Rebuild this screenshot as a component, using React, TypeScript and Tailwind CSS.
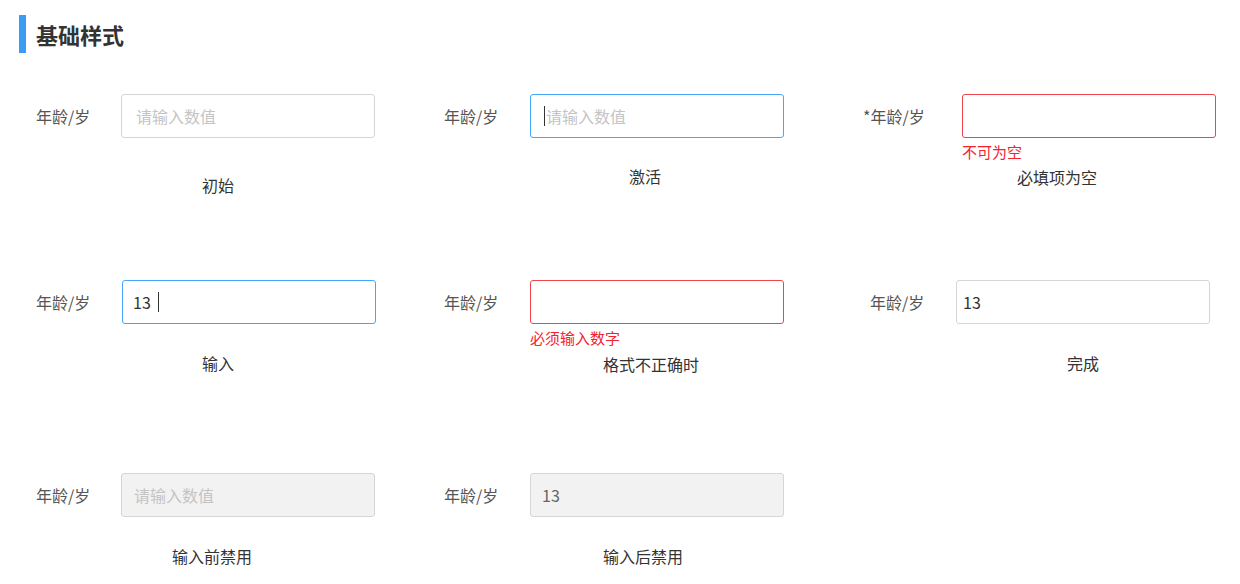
const FONT = "font-['Noto_Sans_CJK_SC','Noto_Sans',sans-serif]";

type FieldProps = {
  label: string;
  labelW: string;
  box: string;
  children?: React.ReactNode;
  error?: string;
  caption: string;
  captionCls: string;
};

function Field({ label, labelW, box, children, error, caption, captionCls }: FieldProps) {
  return (
    <div className="flex flex-col">
      <div className="flex items-center">
        <div className={`${labelW} shrink-0 text-[16px] text-[#555]`}>{label}</div>
        <div
          className={`flex h-[44px] w-[254px] items-center rounded-[3px] border text-[16px] ${box}`}
        >
          {children}
        </div>
      </div>
      {error && (
        <div className={`${labelW === 'w-[99px]' ? 'ml-[99px]' : 'ml-[86px]'} mt-[4px] text-[15px] leading-[20px] text-[#f5222d]`}>
          {error}
        </div>
      )}
      <div className={`text-[16px] leading-[24px] text-[#333] ${captionCls}`}>{caption}</div>
    </div>
  );
}

function Caret({ className = '' }: { className?: string }) {
  return <span className={`inline-block h-[20px] w-px bg-[#333] ${className}`} />;
}

export default function App() {
  return (
    <div className={`h-[584px] w-[1240px] overflow-hidden bg-white ${FONT}`}>
      <div className="flex items-center pl-[19px] pt-[15px]">
        <div className="h-[38px] w-[7px] bg-[#3a9cf5]" />
        <h2 className="ml-[10px] text-[22px] font-bold leading-[38px] text-[#333]">基础样式</h2>
      </div>

      {/* row 1 */}
      <div className="mt-[41px] grid grid-cols-[408px_419px_1fr] items-start pl-[36px]">
        <Field
          label="年龄/岁"
          labelW="w-[85px]"
          box="border-[#d6d6d6] pl-[14px] text-[#c4c4c4]"
          caption="初始"
          captionCls="mt-[35px] ml-[166px]"
        >
          请输入数值
        </Field>
        <Field
          label="年龄/岁"
          labelW="w-[86px]"
          box="border-[#46a6f7] pl-[13px] text-[#c4c4c4]"
          caption="激活"
          captionCls="mt-[26px] ml-[185px]"
        >
          <Caret className="mr-px" />
          请输入数值
        </Field>
        <Field
          label="*年龄/岁"
          labelW="w-[99px]"
          box="border-[#f0444c]"
          error="不可为空"
          caption="必填项为空"
          captionCls="mt-[3px] ml-[154px]"
        />
      </div>

      {/* row 2 */}
      <div className="mt-[83px] grid grid-cols-[408px_419px_1fr] items-start pl-[36px]">
        <Field
          label="年龄/岁"
          labelW="w-[86px]"
          box="border-[#46a6f7] pl-[10px] text-[#333]"
          caption="输入"
          captionCls="mt-[27px] ml-[166px]"
        >
          13
          <Caret className="ml-[7px]" />
        </Field>
        <Field
          label="年龄/岁"
          labelW="w-[86px]"
          box="border-[#f0444c]"
          error="必须输入数字"
          caption="格式不正确时"
          captionCls="mt-[4px] ml-[159px]"
        />
        <div className="ml-[7px]">
          <Field
            label="年龄/岁"
            labelW="w-[86px]"
            box="border-[#d6d6d6] pl-[6px] text-[#333]"
            caption="完成"
            captionCls="mt-[27px] ml-[197px]"
          >
            13
          </Field>
        </div>
      </div>

      {/* row 3 */}
      <div className="mt-[97px] grid grid-cols-[408px_419px_1fr] items-start pl-[36px]">
        <Field
          label="年龄/岁"
          labelW="w-[85px]"
          box="border-[#d6d6d6] bg-[#f2f2f2] pl-[12px] text-[#c4c4c4]"
          caption="输入前禁用"
          captionCls="mt-[27px] ml-[136px]"
        >
          请输入数值
        </Field>
        <Field
          label="年龄/岁"
          labelW="w-[86px]"
          box="border-[#d6d6d6] bg-[#f2f2f2] pl-[11px] text-[#666]"
          caption="输入后禁用"
          captionCls="mt-[27px] ml-[159px]"
        >
          13
        </Field>
      </div>
    </div>
  );
}
